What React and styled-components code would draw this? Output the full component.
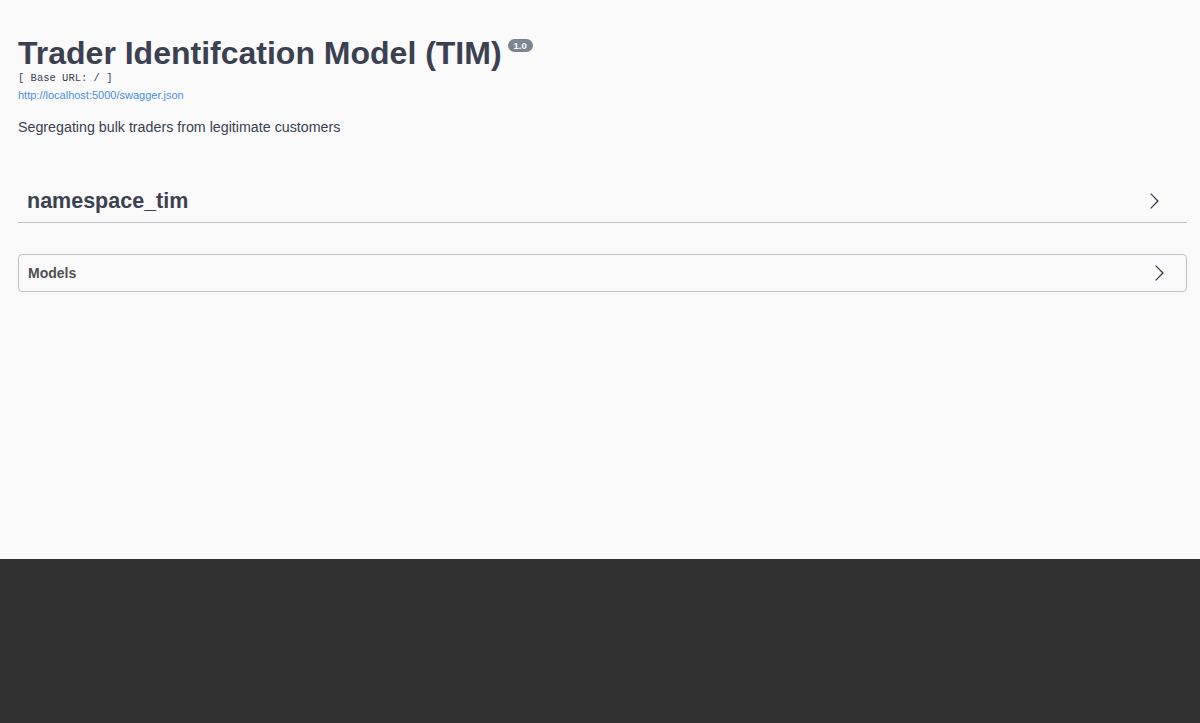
import React from 'react';
import styled, { createGlobalStyle } from 'styled-components';

const GlobalStyle = createGlobalStyle`
  html, body {
    margin: 0;
    padding: 0;
    background: #303030;
  }
  body {
    font-family: "Liberation Sans", Arial, sans-serif;
    color: #3b4151;
  }
`;

const Page = styled.div`
  background: #fafafa;
  height: 559px;
  box-sizing: border-box;
  padding: 0 13px 0 18px;
`;

const Info = styled.div`
  padding-top: 35px;
  margin-bottom: 42px;
`;

const Title = styled.h2`
  margin: 0;
  font-size: 32px;
  line-height: 37px;
  font-weight: bold;
  color: #3b4151;
`;

const Version = styled.small`
  display: inline-block;
  vertical-align: top;
  position: relative;
  top: 4px;
  margin-left: 6px;
  padding: 1px 6px;
  border-radius: 50px;
  background: #7d8492;
  color: #fff;
  font-size: 9.5px;
  line-height: 11px;
  font-weight: bold;
`;

const BaseUrl = styled.pre`
  margin: 0;
  font-family: "Liberation Mono", "Courier New", monospace;
  font-size: 10.5px;
  line-height: 13px;
  color: #3b4151;
`;

const Link = styled.a`
  display: block;
  margin-top: 2px;
  font-size: 11px;
  line-height: 16px;
  color: #4990e2;
  text-decoration: none;
`;

const Description = styled.p`
  margin: 15px 0 0;
  font-size: 14.25px;
  line-height: 18px;
`;

const Chevron = ({ size = 20 }) => (
  <svg width={size} height={size} viewBox="0 0 20 20" fill="currentColor" aria-hidden="true">
    <path d="M13.25 10L6.109 2.58a.697.697 0 0 1 0-.979.68.68 0 0 1 .969 0l7.83 7.908a.697.697 0 0 1 0 .979l-7.83 7.908a.68.68 0 0 1-.969 0 .697.697 0 0 1 0-.979L13.25 10z" />
  </svg>
);

const TagHeader = styled.div`
  display: flex;
  align-items: center;
  justify-content: space-between;
  padding: 9px 24px 7px 9px;
  border-bottom: 1px solid rgba(59, 65, 81, 0.3);
  color: #3b4151;
`;

const TagName = styled.h4`
  margin: 0;
  font-size: 21.5px;
  line-height: 28px;
  font-weight: bold;
`;

const Models = styled.section`
  margin-top: 31px;
  border: 1px solid rgba(59, 65, 81, 0.3);
  border-radius: 4px;
`;

const ModelsHeader = styled.div`
  display: flex;
  align-items: center;
  justify-content: space-between;
  height: 36px;
  padding: 0 18px 0 9px;
  color: #3b4151;
`;

const ModelsTitle = styled.h4`
  margin: 0;
  font-size: 14px;
  font-weight: bold;
  color: #505050;
`;

export default function App() {
  return (
    <>
      <GlobalStyle />
      <Page>
        <Info>
          <Title>
            Trader Identifcation Model (TIM)
            <Version>1.0</Version>
          </Title>
          <BaseUrl>[ Base URL: / ]</BaseUrl>
          <Link href="#">http://localhost:5000/swagger.json</Link>
          <Description>Segregating bulk traders from legitimate customers</Description>
        </Info>
        <TagHeader>
          <TagName>namespace_tim</TagName>
          <Chevron size={18} />
        </TagHeader>
        <Models>
          <ModelsHeader>
            <ModelsTitle>Models</ModelsTitle>
            <Chevron size={18} />
          </ModelsHeader>
        </Models>
      </Page>
    </>
  );
}
